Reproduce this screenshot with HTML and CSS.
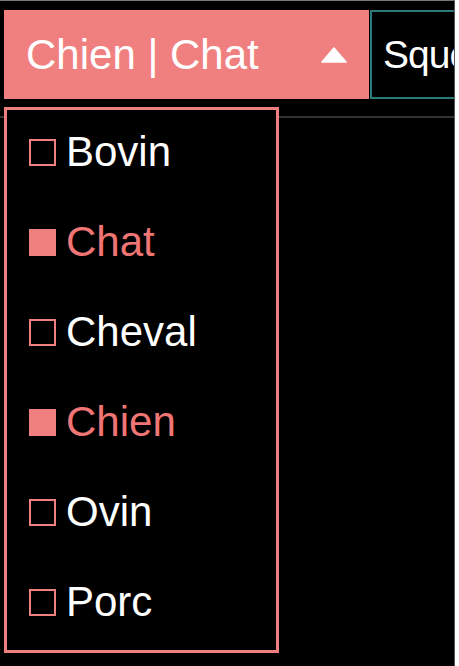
FILE: index.html
```html
<!DOCTYPE html>
<html lang="fr">
<head>
  <meta charset="UTF-8" />
  <meta name="viewport" content="width=device-width, initial-scale=1.0"/>
  <title>Espèces</title>
  <link rel="stylesheet" href="styles.css">
</head>
<body>
  <div class="screen">
    <div class="toolbar">
      <button class="picker" type="button">
        <span class="picker-label">Chien | Chat</span>
        <svg class="caret" width="26" height="16" viewBox="0 0 26 16">
          <path d="M13 1 L25 15 L1 15 Z" fill="#fff" stroke="#fff" stroke-width="1.5" stroke-linejoin="round"/>
        </svg>
      </button>
      <div class="search">Sque</div>
    </div>
    <div class="rule"></div>

    <ul class="menu">
      <li><span class="box"></span>Bovin</li>
      <li class="on"><span class="box"></span>Chat</li>
      <li><span class="box"></span>Cheval</li>
      <li class="on"><span class="box"></span>Chien</li>
      <li><span class="box"></span>Ovin</li>
      <li><span class="box"></span>Porc</li>
    </ul>
  </div>
</body>
</html>
```

FILE: styles.css
```css
*{margin:0;padding:0;box-sizing:border-box}
html,body{height:100%;background:#fff;font-family:'Liberation Sans',Arial,sans-serif}
.screen{position:relative;width:455px;height:666px;background:#000;border-top:1px solid #777;border-right:1px solid #555;overflow:hidden}

/* top bar: species picker + search field */
.toolbar{display:flex;padding:9px 0 0 4px;height:99px}
.picker{width:365px;height:89px;flex:none;display:flex;align-items:center;justify-content:space-between;padding:0 22px;background:#f08080;border:none;color:#fff;font:42px 'Liberation Sans',Arial,sans-serif;cursor:pointer}
.caret{display:block}
.search{flex:1;margin-left:1px;height:89px;display:flex;align-items:center;padding-left:11px;border:2px solid #2b7b7b;border-right:none;color:#fff;font-size:39px;letter-spacing:-1px;white-space:nowrap;overflow:hidden}
.rule{margin-top:16px;height:2px;background:#333}

/* open dropdown */
.menu{position:absolute;left:4px;top:106px;width:275px;border:3px solid #f08080;background:#000;list-style:none;padding-left:22px}
.menu li{font-size:42px;line-height:84px;padding-bottom:6px;color:#fff;white-space:nowrap}
.menu li.on{color:#f07575}
.box{display:inline-block;width:27px;height:27px;border:2px solid #f08080;margin-right:10px;vertical-align:baseline}
.menu li.on .box{background:#f08080}
```
